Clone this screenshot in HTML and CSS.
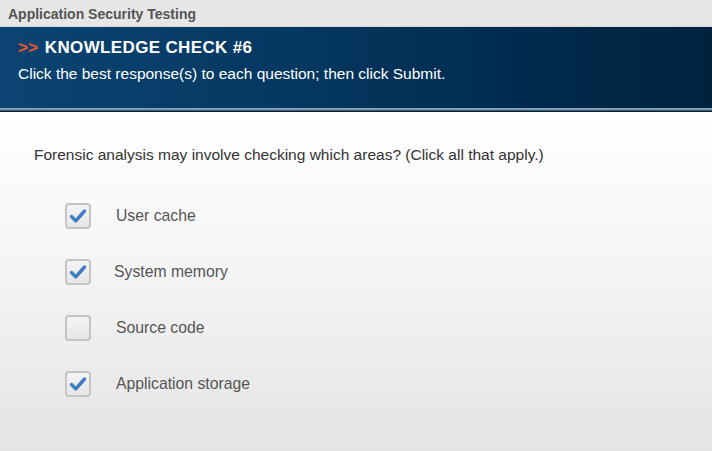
FILE: index.html
```html
<!DOCTYPE html>
<html>
<head>
<meta charset="utf-8">
<link rel="stylesheet" href="styles.css">
</head>
<body>
<div class="titlebar">Application Security Testing</div>
<div class="header">
  <div class="kc"><span class="arrows">&gt;&gt;</span><span class="kc-text">KNOWLEDGE CHECK #6</span></div>
  <div class="instr">Click the best response(s) to each question; then click Submit.</div>
</div>
<div class="rule"></div>
<div class="content">
  <div class="question">Forensic analysis may involve checking which areas? (Click all that apply.)</div>
  <div class="options">
    <div class="opt"><span class="box checked"><svg viewBox="0 0 20 20" width="20" height="20"><path d="M3.5 10.5 L7.8 14.8 L16.5 5" fill="none" stroke="#3d7fc1" stroke-width="3.4" stroke-linecap="round" stroke-linejoin="round"/></svg></span><span class="label">User cache</span></div>
    <div class="opt"><span class="box checked"><svg viewBox="0 0 20 20" width="20" height="20"><path d="M3.5 10.5 L7.8 14.8 L16.5 5" fill="none" stroke="#3d7fc1" stroke-width="3.4" stroke-linecap="round" stroke-linejoin="round"/></svg></span><span class="label shift">System memory</span></div>
    <div class="opt"><span class="box"></span><span class="label">Source code</span></div>
    <div class="opt"><span class="box checked"><svg viewBox="0 0 20 20" width="20" height="20"><path d="M3.5 10.5 L7.8 14.8 L16.5 5" fill="none" stroke="#3d7fc1" stroke-width="3.4" stroke-linecap="round" stroke-linejoin="round"/></svg></span><span class="label">Application storage</span></div>
  </div>
</div>
</body>
</html>
```
FILE: styles.css
```css
html, body {
  margin: 0;
  padding: 0;
}
body {
  width: 712px;
  height: 451px;
  overflow: hidden;
  font-family: "Liberation Sans", Arial, sans-serif;
  background: linear-gradient(to bottom, #ffffff 0px, #ffffff 112px, #f6f6f6 250px, #e4e4e4 451px);
}
.titlebar {
  height: 27px;
  background: #e6e6e6;
  color: #555;
  font-weight: bold;
  font-size: 14px;
  line-height: 29px;
  padding-left: 8px;
  box-sizing: border-box;
  border-bottom: 1px solid #d8d8d8;
}
.header {
  height: 81px;
  box-sizing: border-box;
  padding: 11px 0 0 18px;
  background: linear-gradient(to right, #0b4472 0%, #063a64 35%, #012c50 70%, #00223d 100%);
  color: #fff;
}
.kc {
  display: flex;
  font-weight: bold;
  font-size: 17px;
  line-height: 20px;
}
.arrows {
  color: #f2582a;
  margin-right: 7px;
}
.kc-text {
  letter-spacing: 0.35px;
}
.instr {
  font-size: 15.5px;
  margin-top: 7px;
  line-height: 18px;
}
.rule {
  height: 4px;
  background: linear-gradient(to bottom, #8fb0c8 0px, #6d8ea8 2px, #0d2233 3px, #0d2233 4px);
}
.content {
  padding: 34px 0 0 34px;
}
.question {
  color: #333;
  font-size: 15.5px;
  line-height: 18px;
}
.options {
  display: flex;
  flex-direction: column;
  gap: 30px;
  margin-top: 39px;
  padding-left: 31px;
}
.opt {
  display: flex;
  align-items: center;
  height: 26px;
}
.box {
  width: 26px;
  height: 26px;
  box-sizing: border-box;
  border: 2px solid #c4c4c4;
  border-radius: 4px;
  background: linear-gradient(to bottom, #f4f4f4, #e6e6e6);
  display: flex;
  align-items: center;
  justify-content: center;
}
.label {
  margin-left: 25px;
  color: #555;
  font-size: 15.75px;
}
.label.shift {
  margin-left: 23px;
}
```
